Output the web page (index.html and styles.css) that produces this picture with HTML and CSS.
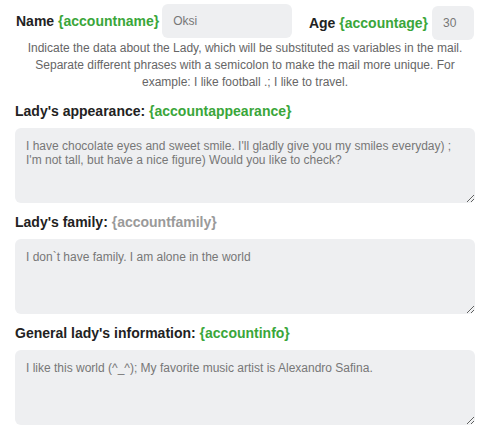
FILE: index.html
```html
<!DOCTYPE html>
<html>
<head>
<meta charset="utf-8">
<link rel="stylesheet" href="styles.css">
</head>
<body>
<div class="form">
  <div class="top-row">
    <div class="field-inline field-name">
      <label class="label">Name <span class="var">{accountname}</span></label>
      <input class="input input-name" type="text" value="Oksi">
    </div>
    <div class="field-inline field-age">
      <label class="label">Age <span class="var">{accountage}</span></label>
      <input class="input input-age" type="text" value="30">
    </div>
  </div>
  <p class="help">Indicate the data about the Lady, which will be substituted as variables in the mail. Separate different phrases with a semicolon to make the mail more unique. For example: I like football .; I like to travel.</p>
  <div class="field field-first">
    <label class="label">Lady's appearance: <span class="var">{accountappearance}</span></label>
    <textarea class="area">I have chocolate eyes and sweet smile. I'll gladly give you my smiles everyday) ; I'm not tall, but have a nice figure) Would you like to check?</textarea>
  </div>
  <div class="field">
    <label class="label">Lady's family: <span class="var var-muted">{accountfamily}</span></label>
    <textarea class="area">I don`t have family. I am alone in the world</textarea>
  </div>
  <div class="field">
    <label class="label">General lady's information: <span class="var">{accountinfo}</span></label>
    <textarea class="area">I like this world (^_^); My favorite music artist is Alexandro Safina.</textarea>
  </div>
</div>
</body>
</html>
```

FILE: styles.css
```css
* { box-sizing: border-box; }
html, body { margin: 0; padding: 0; background: #fff; }
body {
  font-family: "Liberation Sans", Arial, Helvetica, sans-serif;
  color: #222;
}
.form {
  width: 475px;
  padding: 4px 0 0 15px;
}
.top-row {
  display: flex;
  align-items: flex-start;
  justify-content: space-between;
}
.field-inline {
  display: flex;
  align-items: center;
}
.field-name { padding-left: 1px; }
.field-age { margin-top: 2px; margin-right: 1px; }
.label {
  font-size: 14px;
  font-weight: bold;
  line-height: 20px;
  color: #222;
  display: block;
}
.var { color: #3aa63a; }
.var-muted { color: #9a9a9a; }
.input {
  border: none;
  outline: none;
  background: #eeeff1;
  border-radius: 6px;
  height: 34px;
  padding: 0 11px;
  font-family: inherit;
  font-size: 12px;
  color: #777;
}
.input-name { width: 130px; margin-left: 3px; }
.input-age { width: 42px; margin-left: 4px; }
.help {
  margin: 0;
  text-align: center;
  font-size: 12px;
  line-height: 17px;
  color: #666;
}
.field { margin-top: 9px; }
.field-first { margin-top: 10px; }
.field .label { margin-bottom: 7px; }
.area {
  display: block;
  width: 460px;
  height: 75px;
  border: none;
  outline: none;
  background: #eeeff1;
  border-radius: 6px;
  padding: 11px 11px 10px;
  font-family: inherit;
  font-size: 12px;
  line-height: 14px;
  color: #777;
  resize: vertical;
  margin: 0;
}
```
